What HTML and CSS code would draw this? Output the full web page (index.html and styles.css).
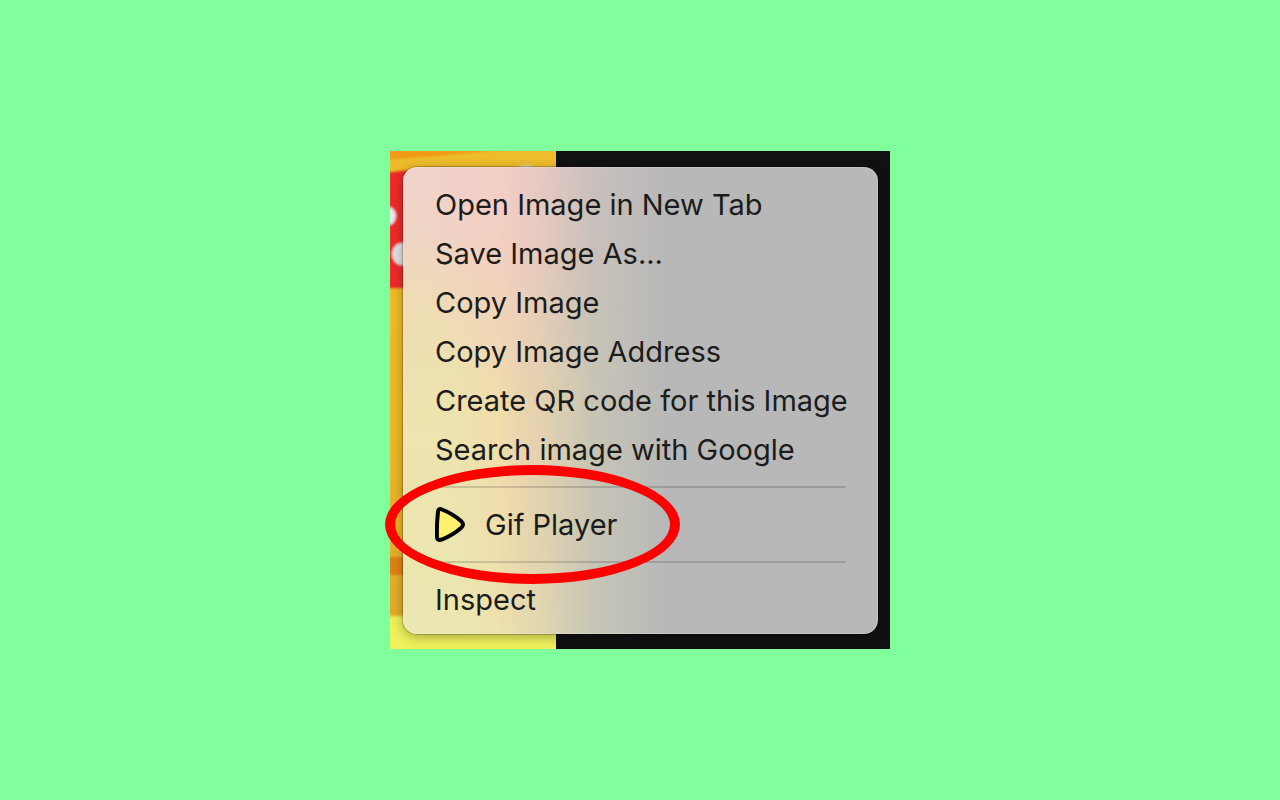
FILE: index.html
```
<!DOCTYPE html>
<html lang="en">
<head>
  <meta charset="utf-8">
  <meta name="viewport" content="width=device-width, initial-scale=1">
  <title>Gif Player</title>
  <link rel="stylesheet" href="styles.css">
</head>
<body>

  <main class="shot">
    <svg class="photo" viewBox="0 0 166 498" aria-hidden="true">
      <defs>
        <linearGradient id="side" x1="0" y1="0" x2="0" y2="1">
          <stop offset="0" stop-color="#eebc2c"/>
          <stop offset=".55" stop-color="#edb928"/>
          <stop offset="1" stop-color="#e0a82c"/>
        </linearGradient>
        <filter id="soft"><feGaussianBlur stdDeviation="1"/></filter>
      </defs>
      <rect width="166" height="498" fill="url(#side)"/>
      <g filter="url(#soft)">
        <path d="M-5-5H150Q70 3-5 9Z" fill="#f09a14"/>
        <path d="M-5 22Q20 18 60 17V137H-5Z" fill="#ee2a2c"/>
        <ellipse cx="-1" cy="65" rx="7" ry="9" fill="#e8e8e8"/>
        <ellipse cx="12" cy="103" rx="10" ry="11" fill="#e0e0e0"/>
        <ellipse cx="136" cy="18" rx="9" ry="4" fill="#ddd9a8"/>
        <path d="M-5 406H60V424H-5Z" fill="#de8118"/>
        <path d="M-5 465H175V505H-5Z" fill="#eef05c"/>
      </g>
    </svg>

    <div class="menu" role="menu">
      <button class="item" role="menuitem">Open Image in New Tab</button>
      <button class="item" role="menuitem">Save Image As...</button>
      <button class="item" role="menuitem">Copy Image</button>
      <button class="item" role="menuitem">Copy Image Address</button>
      <button class="item" role="menuitem">Create QR code for this Image</button>
      <button class="item" role="menuitem">Search image with Google</button>
      <hr class="line">
      <div class="marked">
        <button class="item" role="menuitem">
          <svg class="icon" viewBox="0 0 30 36" aria-hidden="true">
            <path d="M3 5Q3 1 7 2.500Q18 7 26 14Q30 17.500 26 21Q18 28 7 32.500Q2 34 2 30Q1.500 18 3 5Z" fill="#fff16e" stroke="#000" stroke-width="4" stroke-linejoin="round"/>
          </svg>
          Gif Player
        </button>
        <span class="ring"></span>
      </div>
      <hr class="line">
      <button class="item" role="menuitem">Inspect</button>
    </div>
  </main>

</body>
</html>
```
FILE: styles.css
```
body {
  margin: 0;
  min-height: 100vh;
  display: flex;
  justify-content: center;
  align-items: center;
  background: #80ff9c;
  font-family: Inter, "Liberation Sans", sans-serif;
}

.shot {
  position: relative;
  box-sizing: border-box;
  width: 500px;
  max-width: 100%;
  padding: 16px 12px 15px 13px;
  background: #111;
}

/* picture behind the menu */
.photo {
  position: absolute;
  top: 0;
  left: 0;
  width: 166px;
  height: 100%;
}

.menu {
  position: relative;
  padding: 13px 32px 10px;
  border-radius: 14px;
  background:
    linear-gradient(to right, rgba(184, 184, 184, 0) 20%, rgba(184, 184, 184, .25) 29%, rgba(184, 184, 184, .7) 40%, #b8b8b8 55%),
    radial-gradient(ellipse 100px 200px at 25% 10%, rgba(246, 203, 197, .8), rgba(246, 203, 197, 0)),
    radial-gradient(ellipse 80px 400px at 27% 60%, rgba(243, 214, 170, .8), rgba(243, 214, 170, 0)),
    linear-gradient(to bottom, #f0d3cc, #efd5c4 15%, #eedcb4 30%, #ede3ae 50%, #ebe7b0);
  box-shadow: 0 0 0 1px rgba(0, 0, 0, .2), 0 3px 12px rgba(0, 0, 0, .3), inset 0 0 1px 1px rgba(255, 255, 255, .2);
}

.item {
  display: flex;
  align-items: center;
  width: 100%;
  height: 49px;
  padding: 0;
  border: 0;
  background: none;
  color: #1c1c1c;
  font: inherit;
  font-size: 29px;
  white-space: nowrap;
}

.icon {
  width: 30px;
  height: 36px;
  margin-right: 20px;
}

.line {
  height: 2px;
  margin: 12px 0;
  border: 0;
  background: rgba(0, 0, 0, .15);
}

.marked {
  position: relative;
}

/* red circle drawn over the Gif Player entry */
.ring {
  position: absolute;
  top: -35px;
  left: -50px;
  box-sizing: border-box;
  width: 295px;
  height: 119px;
  border: 10px solid #f00;
  border-radius: 50%;
  pointer-events: none;
}
```
